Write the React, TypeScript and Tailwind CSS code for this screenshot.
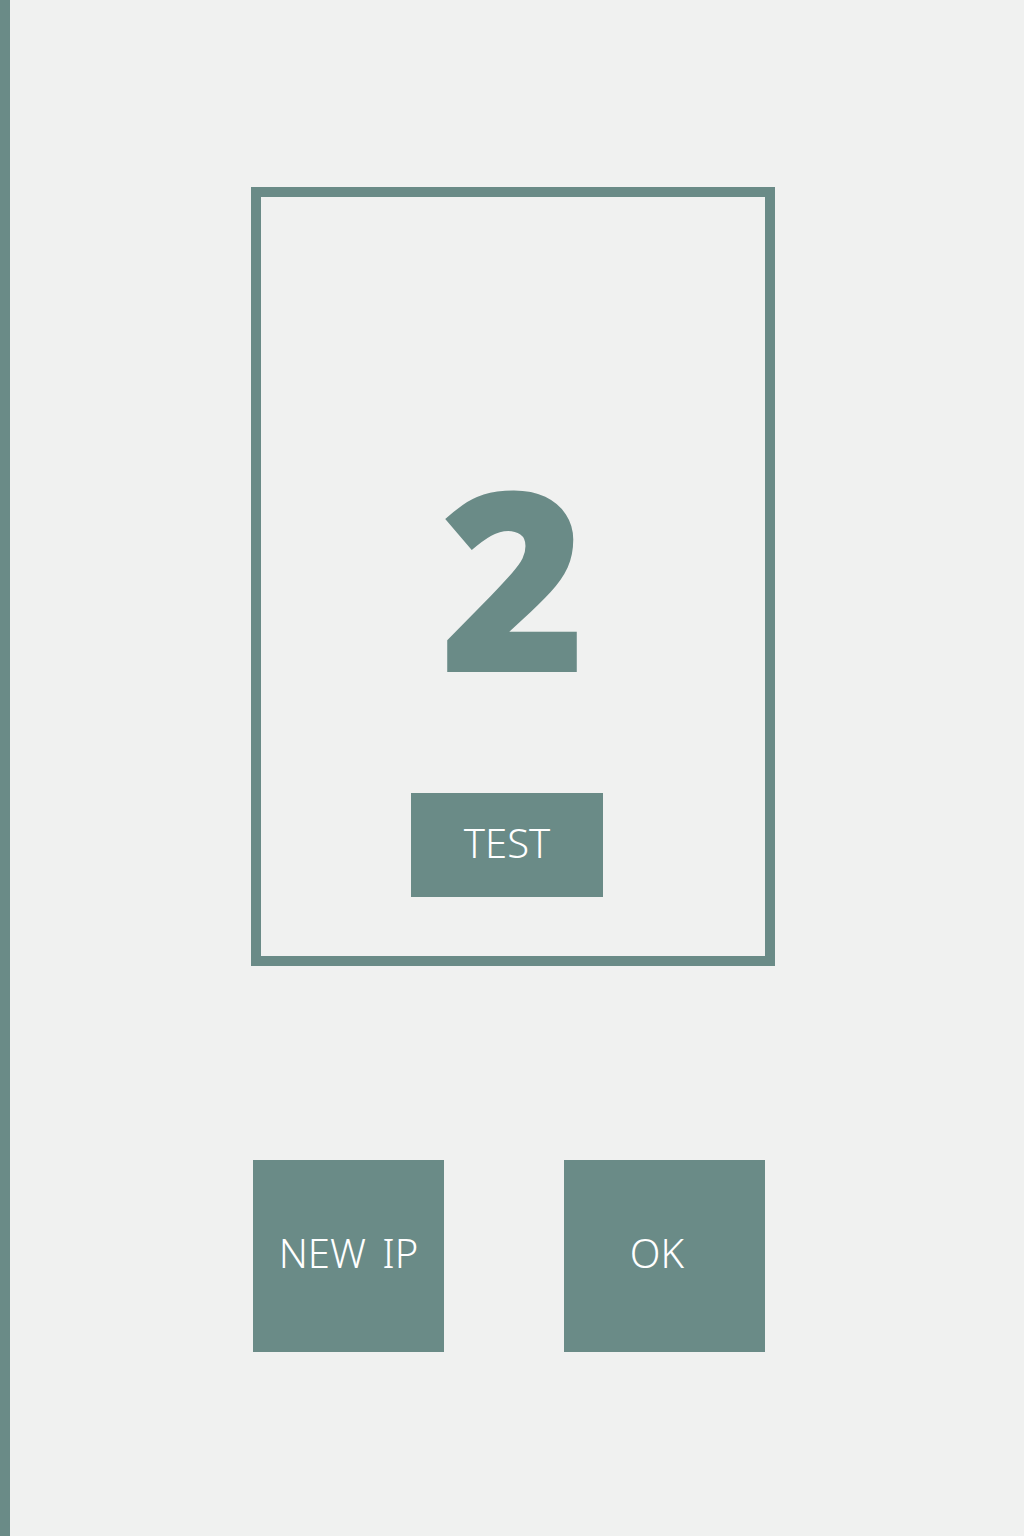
import React from 'react';

const App: React.FC = () => {
    return (
        <div className="flex min-h-[1536px] w-[1024px] bg-[#f0f1f0] font-['Noto_Sans',sans-serif]">
            {/* Left accent bar */}
            <div className="w-[10px] shrink-0 bg-[#6a8b87]" />

            <div className="flex flex-col pl-[241px]">
                {/* Counter panel */}
                <div className="mt-[187px] flex h-[779px] w-[524px] flex-col items-center border-[10px] border-[#6a8b87]">
                    <div className="mt-[253px] h-[250px] text-[250px] font-black leading-[250px] text-[#6a8b87]">2</div>
                    <button className="mt-[93px] mr-[12px] flex h-[104px] w-[192px] items-center justify-center bg-[#6a8b87] pb-[4px] text-[40px] font-light text-white">
                        TEST
                    </button>
                </div>

                {/* Actions */}
                <div className="mt-[194px] flex gap-[120px] pl-[2px]">
                    <button className="flex h-[192px] w-[191px] items-center justify-center bg-[#6a8b87] pb-[6px] text-[40px] font-light text-white [word-spacing:6px]">
                        NEW IP
                    </button>
                    <button className="flex h-[192px] w-[201px] items-center justify-center bg-[#6a8b87] pr-[15px] pb-[6px] text-[40px] font-light text-white">
                        OK
                    </button>
                </div>
            </div>
        </div>
    );
};

export default App;
